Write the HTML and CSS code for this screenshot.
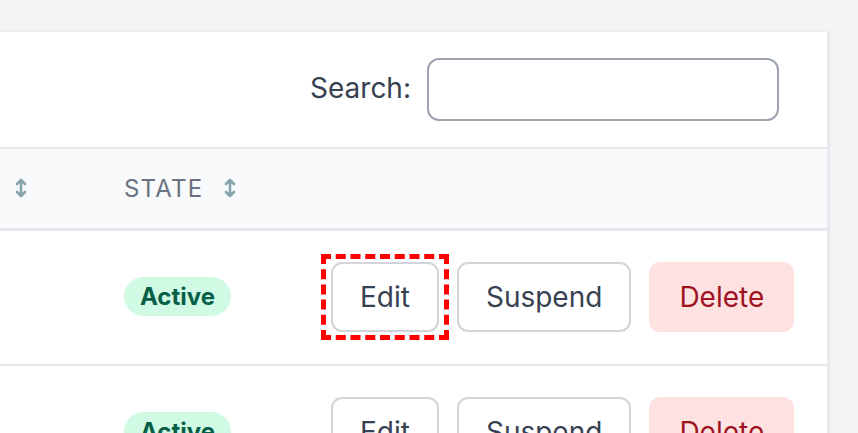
FILE: index.html
```html
<!DOCTYPE html>
<html lang="en">
<head>
  <meta charset="UTF-8">
  <title>Users</title>
  <link rel="stylesheet" href="styles.css">
</head>
<body>

  <div class="card">
    <div class="search-row">
      <label for="search">Search:</label>
      <input id="search" class="search-input" type="text">
    </div>

    <table class="users-table">
      <thead>
        <tr>
          <th class="col-prev"><span class="sort"><svg viewBox="0 0 12 22" width="12" height="22"><path d="M6 3v16M2 7l4-4 4 4M2 15l4 4 4-4" fill="none" stroke="currentColor" stroke-width="2.6" stroke-linecap="round" stroke-linejoin="round"/></svg></span></th>
          <th class="col-state">State<span class="sort"><svg viewBox="0 0 12 22" width="12" height="22"><path d="M6 3v16M2 7l4-4 4 4M2 15l4 4 4-4" fill="none" stroke="currentColor" stroke-width="2.6" stroke-linecap="round" stroke-linejoin="round"/></svg></span></th>
          <th class="col-actions"></th>
        </tr>
      </thead>
      <tbody>
        <tr>
          <td></td>
          <td><span class="badge">Active</span></td>
          <td>
            <div class="actions">
              <button class="btn focused">Edit</button>
              <button class="btn">Suspend</button>
              <button class="btn btn-danger">Delete</button>
            </div>
          </td>
        </tr>
        <tr>
          <td></td>
          <td><span class="badge">Active</span></td>
          <td>
            <div class="actions">
              <button class="btn">Edit</button>
              <button class="btn">Suspend</button>
              <button class="btn btn-danger">Delete</button>
            </div>
          </td>
        </tr>
      </tbody>
    </table>
  </div>

</body>
</html>
```

FILE: styles.css
```css
body {
  font-family: Inter, "Noto Sans", sans-serif;
  background-color: #f3f4f6;
  margin: 0;
  padding: 32px 28px 0 0;
  color: #374151;
  overflow: hidden;
}
.card {
  background-color: white;
  overflow: hidden;
  border-right: 3px solid #e8e9ec;
  box-shadow: 0 -1px 2px rgba(0,0,0,0.04);
}
.search-row {
  height: 115px;
  display: flex;
  align-items: center;
  justify-content: flex-end;
  gap: 16px;
  padding-right: 48px;
}
.search-row label {
  font-size: 28px;
  color: #374151;
  position: relative;
  top: -2px;
}
.search-input {
  width: 352px;
  height: 63px;
  box-sizing: border-box;
  border: 2px solid #9ca3af;
  border-radius: 12px;
  background: white;
}
.users-table {
  width: 100%;
  border-collapse: collapse;
  table-layout: fixed;
}
.users-table th {
  box-sizing: border-box;
  background-color: #f9fafb;
  border-top: 2px solid #e5e7eb;
  border-bottom: 3px solid #e5e7eb;
  height: 81px;
  padding: 0 48px;
  text-align: left;
  font-size: 24px;
  font-weight: 400;
  letter-spacing: 0.05em;
  text-transform: uppercase;
  color: #6b7280;
  white-space: nowrap;
}
.users-table th.col-prev {
  width: 76px;
  padding: 0 49px 0 0;
  text-align: right;
}
.users-table th.col-state {
  width: 207px;
}
.sort {
  display: inline-block;
  vertical-align: middle;
  color: #86a3ae;
  margin-left: 21px;
  line-height: 0;
  position: relative;
  top: -2px;
}
.col-prev .sort {
  margin-left: 0;
}
.users-table td {
  padding: 31px 48px 32px;
  border-bottom: 2px solid #e5e7eb;
  vertical-align: middle;
}
.users-table td:first-child {
  padding: 0;
}
.badge {
  display: inline-block;
  background-color: #d1fae5;
  color: #065f46;
  font-size: 24px;
  font-weight: 700;
  line-height: 39px;
  padding: 0 16px;
  border-radius: 20px;
}
.actions {
  display: flex;
  gap: 18px;
}
.btn {
  font-family: Inter, "Noto Sans", sans-serif;
  font-size: 28px;
  line-height: 40px;
  padding: 13px 27px;
  background-color: white;
  color: #374151;
  border: 2px solid #d1d5db;
  border-radius: 11px;
  cursor: pointer;
  white-space: nowrap;
  flex-shrink: 0;
}
.btn-danger {
  background-color: #fee2e2;
  border-color: #fee2e2;
  color: #9f1222;
  padding: 13px 28px;
}
.btn.focused {
  position: relative;
  outline: none;
}
.btn.focused::after {
  content: "";
  position: absolute;
  left: -12px;
  right: -12px;
  top: -10px;
  bottom: -10px;
  border: 5px dashed #ff0000;
}
```
